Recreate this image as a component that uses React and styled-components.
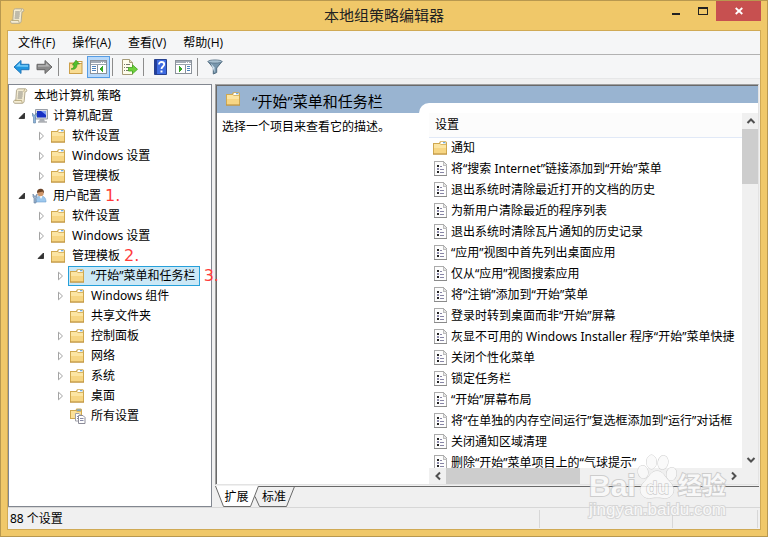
import React from 'react';
import styled, { createGlobalStyle, css } from 'styled-components';

const GlobalStyle = createGlobalStyle`
  * {
    box-sizing: border-box;
  }

  body {
    margin: 0;
    font-family: 'Noto Sans', 'Noto Sans CJK SC', sans-serif;
    font-size: 12px;
    line-height: 16px;
    color: #000;
  }

  button {
    margin: 0;
    padding: 0;
    border: 0;
    background: none;
    font: inherit;
    color: inherit;
  }

  svg {
    display: block;
    flex: none;
  }
`;

/* ---------- window frame ---------- */

const WindowFrame = styled.div`
  position: relative;
  display: flex;
  flex-direction: column;
  height: 100vh;
  padding: 0 6px 6px;
  border: 1px solid #b8984f;
  background: #f0c869;
`;

const TitleBar = styled.header`
  display: grid;
  grid-template-columns: 1fr auto 1fr;
  align-items: center;
  flex: none;
  height: 29px;
`;

const TitleIcon = styled.div`
  padding-left: 3px;
`;

const Title = styled.h1`
  margin: 0;
  padding-bottom: 2px;
  font-size: 15px;
  line-height: 20px;
  font-weight: 400;
  color: #222;
`;

const WindowControls = styled.div`
  display: flex;
  align-self: start;
  justify-content: flex-end;
`;

const ControlButton = styled.button`
  display: flex;
  align-items: center;
  justify-content: center;
  width: ${(p) => (p.$close ? '45px' : '27px')};
  height: 20px;
  background: ${(p) => (p.$close ? '#c75050' : 'transparent')};
`;

const Client = styled.div`
  display: flex;
  flex-direction: column;
  flex: 1;
  min-height: 0;
  border: 1px solid #d0aa55;
  background: #f0f0f0;
`;

/* ---------- menu and toolbar ---------- */

const MenuBar = styled.nav`
  display: flex;
  gap: 1px;
  flex: none;
  height: 24px;
  padding: 0 2px;
  border-bottom: 1px solid #b2b2b2;
  background: #f5f6f7;
`;

const MenuButton = styled.button`
  padding: 0 8px;
  font-family: 'Open Sans', 'Noto Sans CJK SC', sans-serif;
`;

const Toolbar = styled.div`
  display: flex;
  align-items: center;
  flex: none;
  height: 24px;
  padding: 1px 0 0 2px;
  border-bottom: 1px solid #e6e7e8;
  background: #f5f6f7;
`;

const ToolButton = styled.button`
  display: flex;
  align-items: center;
  justify-content: center;
  width: 23px;
  height: 22px;
  ${(p) =>
    p.$active &&
    css`
      border: 1px solid #569de5;
      background: #b8d8f9;
    `}
`;

const Separator = styled.span`
  width: 1px;
  height: 18px;
  margin: 0 5px 0 2px;
  background: #8c8c8c;
`;

/* ---------- panes ---------- */

const Workspace = styled.div`
  display: grid;
  grid-template-columns: 204px minmax(0, 1fr);
  column-gap: 3px;
  flex: 1;
  min-height: 0;
  padding: 5px 1px 0 0;
`;

const TreePane = styled.aside`
  position: relative;
  z-index: 1;
  padding-top: 1px;
  border: 1px solid #828790;
  background: #fff;
`;

const TreeList = styled.ul`
  margin: 0;
  padding: 0;
  list-style: none;
`;

const TreeRow = styled.div`
  display: flex;
  align-items: center;
  height: 20px;
  padding-left: ${(p) => (p.$depth ? p.$depth * 19 - 14 : 2)}px;
`;

const ArrowSlot = styled.span`
  display: flex;
  align-items: center;
  justify-content: center;
  flex: none;
  width: 16px;
`;

const TreeItem = styled.button`
  display: flex;
  align-items: center;
  gap: 5px;
  height: 20px;
  padding: 0 3px 0 1px;
  border: 1px solid ${(p) => (p.$selected ? '#26a0da' : 'transparent')};
  background: ${(p) => (p.$selected ? '#cbe8f6' : 'transparent')};
  white-space: nowrap;
`;

const StepMark = styled.span`
  padding-left: ${(p) => (p.$apart ? '4px' : '0')};
  font-family: 'DejaVu Sans', sans-serif;
  font-size: 16px;
  line-height: 20px;
  color: #ff3b3b;
`;

const ResultPane = styled.main`
  display: flex;
  flex-direction: column;
  min-height: 0;
`;

const ResultBox = styled.section`
  display: flex;
  flex-direction: column;
  flex: 1;
  min-height: 0;
  border: 1px solid;
  border-color: #a0a0a0 #e3e3e3 #e3e3e3 #a0a0a0;
  box-shadow: inset 1px 1px 0 #696969;
  padding: 1px 0 0 1px;
  background: #fff;
`;

const Banner = styled.div`
  display: grid;
  grid-template-columns: 202px minmax(0, 1fr);
  flex: none;
  height: 27px;
  background: #99b4d1;
`;

const BannerTitle = styled.h2`
  display: flex;
  align-items: center;
  gap: 10px;
  margin: 0;
  padding: 2px 0 0 9px;
  font-size: 15px;
  line-height: 20px;
  font-weight: 400;
  white-space: nowrap;
`;

const BannerIcon = styled.span`
  align-self: flex-start;
  padding-top: 3px;
`;

const BannerCurve = styled.div`
  align-self: end;
  height: 10px;
  border-top-left-radius: 10px;
  background: #fff;
`;

const Details = styled.div`
  display: grid;
  grid-template-columns: 212px minmax(0, 1fr);
  flex: 1;
  min-height: 0;
`;

const Description = styled.p`
  margin: 0;
  padding: 6px 5px;
`;

const ListArea = styled.div`
  display: grid;
  grid-template-columns: minmax(0, 1fr) 16px;
  grid-template-rows: minmax(0, 1fr) 16px;
  min-height: 0;
  background: #f0f0f0;
`;

const ListViewport = styled.div`
  overflow: hidden;
  background: #fff;
`;

const SettingsTable = styled.table`
  width: 100%;
  border-collapse: collapse;
  table-layout: fixed;
`;

const HeaderCell = styled.th`
  height: 24px;
  padding: 0 6px;
  border-bottom: 1px solid #e1e9f7;
  background: #fcfcfc;
  font-weight: 400;
  text-align: left;
`;

const SettingCell = styled.td`
  height: 21px;
  padding: 0 0 0 4px;
`;

const SettingName = styled.div`
  display: flex;
  align-items: center;
  gap: 2px;
  height: 20px;
  white-space: nowrap;
`;

const ScrollTrack = styled.div`
  display: flex;
  flex-direction: ${(p) => (p.$vertical ? 'column' : 'row')};
`;

const ScrollButton = styled.button`
  display: flex;
  align-items: center;
  justify-content: center;
  flex: none;
  width: 17px;
  height: 16px;
`;

const ScrollRail = styled.div`
  display: flex;
  flex-direction: inherit;
  flex: 1;
  min-height: 0;
`;

const ScrollThumb = styled.div`
  flex: 0 0 ${(p) => p.$size};
  background: #cdcdcd;
`;

/* ---------- bottom tabs and status bar ---------- */

const TabStrip = styled.div`
  display: flex;
  flex: none;
  height: 22px;
  padding-top: 1px;
`;

const TabButton = styled.button`
  position: relative;
  width: ${(p) => (p.$first ? '40px' : '38px')};
  height: 21px;
  padding-left: ${(p) => (p.$first ? '3px' : '0')};
`;

const TabShape = styled.svg`
  position: absolute;
  top: 0;
  left: 0;
  overflow: visible;
`;

const TabLabel = styled.span`
  position: relative;
`;

const TabFiller = styled.span`
  flex: 1;
  border-top: 1px solid #696969;
`;

const StatusBar = styled.footer`
  display: grid;
  grid-template-columns: minmax(0, 1fr) 133px 85px;
  flex: none;
  height: 22px;
  padding: 2px 2px 1px;
  border-top: 1px solid #d7d7d7;
`;

const StatusCell = styled.span`
  padding-top: 1px;
  border-right: 1px solid #d7d7d7;
`;

const Watermark = styled.div`
  position: absolute;
  z-index: 2;
  right: 40px;
  bottom: 16px;
  width: 138px;
  pointer-events: none;
  font-family: 'Liberation Sans', 'Noto Sans CJK SC', sans-serif;
  color: #fafafa;
  opacity: 0.85;
  -webkit-text-stroke: 2px #c8c8c8;
  paint-order: stroke fill;
`;

const WatermarkLogo = styled.div`
  display: flex;
  align-items: flex-end;
  height: 46px;
`;

const WatermarkText = styled.span`
  font-size: ${(p) => p.$size};
  line-height: 28px;
  font-weight: 700;
`;

const WatermarkUrl = styled.div`
  font-size: 17px;
  line-height: 20px;
  -webkit-text-stroke-color: #d2d2d2;
`;

/* ---------- icons ---------- */

const FolderIcon = () => (
  <svg width="16" height="16" viewBox="0 0 16 16">
    <path d="M0 3h6l1-1.700h6l1 1.200V14.500H0z" fill="#cfa850" />
    <path d="M7.800 2h4.900v2H7.200z" fill="#fff" />
    <path d="M10 2.200h2.300v1H10z" fill="#4a98dc" />
    <path d="M1 4h5.800l1.200.7h5v8.800H1z" fill="#fce5a3" />
    <path d="M1 8h12v5.500H1z" fill="#f7d684" />
    <path d="M0 14h14" stroke="#bd8f3c" />
  </svg>
);

const ScrollIcon = () => (
  <svg width="16" height="16" viewBox="0 0 16 16">
    <path d="M3.500 2.200C4 1 5 .8 6 .8h6.400c1.500 0 2 2.800.4 3H12l-.8 9c0 1.800-1 2.500-2.200 2.500H2c-1.800 0-2-3-.2-3h1z" fill="#f4ecd2" stroke="#b3aa90" />
    <path d="M10.500 3.800c.6 0 .6-2.600 1.600-2.800M1.800 12.400h6.800c.2 1.500.4 2.400 1 2.600" fill="none" stroke="#b8a97c" />
    <path d="M5.200 4h4.600M5 6h4.800M4.800 8h4.800M4.600 10h4.600" stroke="#8b8a83" />
  </svg>
);

const ComputerIcon = () => (
  <svg width="16" height="16" viewBox="0 0 16 16">
    <path d="M3.500 1.500h12v9.500h-12z" fill="#d9dde2" stroke="#9aa0a8" />
    <path d="M5 3h9v6.500H5z" fill="#1730c4" />
    <path d="M9 3h5v4z" fill="#7d9cf1" />
    <path d="M8 11h4l1 2.500H7z" fill="#a9aeb5" />
    <path d="M6 14h9" stroke="#85898f" />
    <path d="M.5 5v3l1 1v6h2V9l1-1V5L3.500 7h-2z" fill="#8fb4d8" stroke="#5b7fa6" strokeWidth=".6" />
  </svg>
);

const UserIcon = () => (
  <svg width="16" height="16" viewBox="0 0 16 16">
    <path d="M4 14c0-4 2-6 5-6s5 2 5 6z" fill="#9cc8ee" stroke="#6f9fcc" strokeWidth=".6" />
    <path d="M7.500 8l1.500 3 1.500-3z" fill="#fff" />
    <circle cx="8.500" cy="5" r="3.200" fill="#d0976a" />
    <path d="M5 5C4.800 2 6.500.8 8.500.8s4 1.400 3.300 4.500L10.500 3.500C8.500 4.300 6.800 4 5 5z" fill="#6b4428" />
    <path d="M1 6v3l1 1v5h2v-5l1-1V6L4 8H2z" fill="#9fb6cf" stroke="#5f7e9f" strokeWidth=".6" />
  </svg>
);

const AllSettingsIcon = () => (
  <svg width="16" height="16" viewBox="0 0 16 16">
    <path d="M0 2h5.500l1-1.500H11l1 1V11H0z" fill="#cfa850" />
    <path d="M1 3h5l1 .8h4V10H1z" fill="#fbe19a" />
    <path d="M7 1.500h4v1.200H6.700z" fill="#6aa8e0" />
    <path d="M5.500 5.500H9L10.500 7v6h-5z" fill="#fff" stroke="#a0a0a8" />
    <path d="M8.500 7.500H13l2 2v6H8.500z" fill="#fff" stroke="#8c8c98" />
    <path d="M7 8.500h1M7 10.500h1M10 10.500h3.500M10 12.500h3.500" stroke="#888aa8" />
  </svg>
);

const PolicyIcon = () => (
  <svg width="16" height="16" viewBox="0 0 16 16" shapeRendering="crispEdges">
    <path d="M1.500.500H10L13.500 4v10.500h-12z" fill="#fdfdfd" stroke="#ababab" />
    <path d="M10 .5V4h3.500" fill="#e6e6e6" stroke="#bdbdbd" />
    <path d="M1 14.500h13" stroke="#8a8a8a" />
    <path d="M4 4h2v2H4zM4 10h2v2H4z" fill="#222" />
    <path d="M4 7h2v2H4zM7 5h2v1H7zM7 8h4v1H7zM7 11h4v1H7z" fill="#8886a6" />
  </svg>
);

const TreeArrow = ({ open }) =>
  open ? (
    <svg width="8" height="8" viewBox="0 0 8 8">
      <path d="M6.500 1v5.500H1z" fill="#333" stroke="#222" strokeWidth=".8" />
    </svg>
  ) : (
    <svg width="8" height="10" viewBox="0 0 8 10">
      <path d="M2.500 1.200v7.600l4-3.800z" fill="#fff" stroke="#a3a3a3" />
    </svg>
  );

const ArrowIcon = ({ right }) => (
  <svg width="17" height="16" viewBox="0 0 17 16">
    <g transform={right ? 'translate(17 0) scale(-1 1)' : undefined}>
      <path
        d="M1 8l7-6.500v3.800h8v5.400H8v3.800z"
        fill={right ? '#8a8a8a' : '#1e96e0'}
        stroke={right ? '#666' : '#2377ba'}
      />
      <path d="M3 7.500l4-3.700v2.500h8v1.500z" fill={right ? '#b5b5b5' : '#7cd0fa'} />
    </g>
  </svg>
);

const FolderUpIcon = () => (
  <svg width="16" height="16" viewBox="0 0 16 16">
    <path d="M1 3.500h6L8.500 2h6v13H1z" fill="#cca04a" />
    <path d="M2 5h11.500v9H2z" fill="#f8dc93" />
    <path d="M9 3h4.500v1H9z" fill="#fff" />
    <path d="M3 10c2-.3 3-1.500 3-4H4.500L8 1.200 11.500 5H9c0 4-2 6-6 5z" fill="#52c02c" stroke="#369519" strokeWidth=".7" />
  </svg>
);

const PaneIcon = ({ right }) => (
  <svg width="17" height="14" viewBox="0 0 17 14" shapeRendering="crispEdges">
    <path d="M.5.500h16v13H.5z" fill="#fff" stroke="#8b929b" />
    <path d="M1 1h15v2H1z" fill="#a4acb7" />
    <path d="M1 4.500h15" stroke="#9aa3af" />
    <path d={right ? 'M10.500 5v8' : 'M7.500 5v8'} stroke="#8b929b" />
    <path
      d={right ? 'M12 6.500h3M12 8.500h3M12 10.500h3' : 'M2 6.500h4M2 8.500h4M2 10.500h4'}
      stroke="#4b82bd"
    />
    <path d={right ? 'M4 6v6l4-3z' : 'M13 6v6L9 9z'} fill="#37a626" />
    <path d="M11 2h1M13 2h1" stroke="#fff" />
  </svg>
);

const ExportIcon = () => (
  <svg width="17" height="16" viewBox="0 0 17 16">
    <path d="M1.500.5h7L11.500 3.500v12h-10z" fill="#fffdec" stroke="#a59b78" />
    <path d="M8.500.5v3h3" fill="#e6dfc0" stroke="#a59b78" />
    <path d="M3 5.500h1M3 8.500h1M3 11.500h1M5 5.500h4M5 8.500h3M5 11.500h3" stroke="#77776c" />
    <path d="M7.500 8.500h4V5.800l5 4.500-5 4.500v-2.800h-4z" fill="#6fd13c" stroke="#42a421" strokeWidth=".8" />
  </svg>
);

const HelpIcon = () => (
  <svg width="14" height="16" viewBox="0 0 14 16">
    <path d="M.5.5h12v15H.5z" fill="#3d6ae0" stroke="#27418f" />
    <path d="M1 1h2v14H1z" fill="#233f9c" />
    <path d="M5 5.500C5 3.700 6.200 3 7.500 3s2.700.8 2.700 2.300C10.200 7.500 7.500 7.500 7.500 10" fill="none" stroke="#fff" strokeWidth="1.800" />
    <path d="M6.500 11.500h2v2h-2z" fill="#fff" />
  </svg>
);

const FilterIcon = () => (
  <svg width="16" height="16" viewBox="0 0 16 16">
    <path d="M1 2.500L6.300 9v6l3.400-1.500V9L15 2.500z" fill="#7897ad" stroke="#516c80" />
    <path d="M4 4.500L7.500 8.500v5z" fill="#d0e2ee" />
    <ellipse cx="8" cy="2.500" rx="7" ry="1.600" fill="#a9c2d2" stroke="#5a7488" strokeWidth=".8" />
  </svg>
);

const chevrons = {
  up: 'M1.500 7L5 3.500 8.500 7',
  down: 'M1.500 3L5 6.500 8.500 3',
  left: 'M7 1.500L3.500 5 7 8.500',
  right: 'M3 1.500L6.500 5 3 8.500',
};

const Chevron = ({ dir }) => (
  <svg width="10" height="10" viewBox="0 0 10 10">
    <path d={chevrons[dir]} fill="none" stroke="#505050" strokeWidth="2" />
  </svg>
);

const PawIcon = () => (
  <svg width="42" height="46" viewBox="0 0 42 46">
    <g fill="#fafafa" stroke="#c8c8c8">
      <ellipse cx="7" cy="18" rx="5" ry="6.500" transform="rotate(-12 7 18)" />
      <ellipse cx="15.500" cy="8" rx="5" ry="7" />
      <ellipse cx="27" cy="8.500" rx="5" ry="7" transform="rotate(12 27 8.500)" />
      <ellipse cx="35.500" cy="20" rx="5" ry="6.500" transform="rotate(10 35.500 20)" />
      <path d="M21 17c6 0 8 6 11.500 9.500S39 34 37 39s-7 5.500-10 5c-4-.6-8-.6-12 0-3 .5-8 0-10-5s1-9 4.500-12.500S15 17 21 17z" />
    </g>
    <text x="10" y="40" fontSize="19" fontWeight="700" fill="#fafafa" stroke="#b8b8b8">
      du
    </text>
  </svg>
);

/* ---------- data ---------- */

const menus = ['文件(F)', '操作(A)', '查看(V)', '帮助(H)'];

const treeNodes = [
  { label: '本地计算机 策略', depth: 0, icon: ScrollIcon },
  { label: '计算机配置', depth: 1, icon: ComputerIcon, open: true },
  { label: '软件设置', depth: 2, open: false },
  { label: 'Windows 设置', depth: 2, open: false },
  { label: '管理模板', depth: 2, open: false },
  { label: '用户配置', depth: 1, icon: UserIcon, open: true, mark: '1.' },
  { label: '软件设置', depth: 2, open: false },
  { label: 'Windows 设置', depth: 2, open: false },
  { label: '管理模板', depth: 2, open: true, mark: '2.' },
  { label: '“开始”菜单和任务栏', depth: 3, open: false, selected: true, mark: '3.' },
  { label: 'Windows 组件', depth: 3, open: false },
  { label: '共享文件夹', depth: 3 },
  { label: '控制面板', depth: 3, open: false },
  { label: '网络', depth: 3, open: false },
  { label: '系统', depth: 3, open: false },
  { label: '桌面', depth: 3, open: false },
  { label: '所有设置', depth: 3, icon: AllSettingsIcon },
];

const settings = [
  '将“搜索 Internet”链接添加到“开始”菜单',
  '退出系统时清除最近打开的文档的历史',
  '为新用户清除最近的程序列表',
  '退出系统时清除瓦片通知的历史记录',
  '“应用”视图中首先列出桌面应用',
  '仅从“应用”视图搜索应用',
  '将“注销”添加到“开始”菜单',
  '登录时转到桌面而非“开始”屏幕',
  '灰显不可用的 Windows Installer 程序“开始”菜单快捷',
  '关闭个性化菜单',
  '锁定任务栏',
  '“开始”屏幕布局',
  '将“在单独的内存空间运行”复选框添加到“运行”对话框',
  '关闭通知区域清理',
  '删除“开始”菜单项目上的“气球提示”',
];

/* ---------- parts ---------- */

function PolicyTree() {
  return (
    <TreePane>
      <TreeList>
        {treeNodes.map((node, i) => {
          const Icon = node.icon || FolderIcon;
          return (
            <li key={i}>
              <TreeRow $depth={node.depth}>
                {node.depth > 0 && (
                  <ArrowSlot>
                    {node.open !== undefined && <TreeArrow open={node.open} />}
                  </ArrowSlot>
                )}
                <TreeItem $selected={node.selected}>
                  <Icon />
                  {node.label}
                </TreeItem>
                {node.mark && <StepMark $apart={node.selected}>{node.mark}</StepMark>}
              </TreeRow>
            </li>
          );
        })}
      </TreeList>
    </TreePane>
  );
}

function SettingsList() {
  return (
    <ListArea>
      <ListViewport>
        <SettingsTable>
          <thead>
            <tr>
              <HeaderCell scope="col">设置</HeaderCell>
            </tr>
          </thead>
          <tbody>
            <tr>
              <SettingCell>
                <SettingName>
                  <FolderIcon />
                  通知
                </SettingName>
              </SettingCell>
            </tr>
            {settings.map((name) => (
              <tr key={name}>
                <SettingCell>
                  <SettingName>
                    <PolicyIcon />
                    {name}
                  </SettingName>
                </SettingCell>
              </tr>
            ))}
          </tbody>
        </SettingsTable>
      </ListViewport>
      <ScrollTrack $vertical>
        <ScrollButton aria-label="向上滚动">
          <Chevron dir="up" />
        </ScrollButton>
        <ScrollRail>
          <ScrollThumb $size="17%" />
        </ScrollRail>
        <ScrollButton aria-label="向下滚动">
          <Chevron dir="down" />
        </ScrollButton>
      </ScrollTrack>
      <ScrollTrack>
        <ScrollButton aria-label="向左滚动">
          <Chevron dir="left" />
        </ScrollButton>
        <ScrollRail>
          <ScrollThumb $size="48%" />
        </ScrollRail>
        <ScrollButton aria-label="向右滚动">
          <Chevron dir="right" />
        </ScrollButton>
      </ScrollTrack>
    </ListArea>
  );
}

function ViewTabs() {
  return (
    <TabStrip role="tablist">
      <TabButton $first role="tab" aria-selected="true">
        <TabShape width="43" height="21">
          <path d="M.5 0L8.500 20.500h27L43.500 0" fill="#fff" stroke="#696969" />
        </TabShape>
        <TabLabel>扩展</TabLabel>
      </TabButton>
      <TabButton role="tab" aria-selected="false">
        <TabShape width="38" height="21">
          <path d="M0 10.500l4.500 10h27L39.500.5H3.500" fill="none" stroke="#696969" />
        </TabShape>
        <TabLabel>标准</TabLabel>
      </TabButton>
      <TabFiller />
    </TabStrip>
  );
}

export default function App() {
  return (
    <>
      <GlobalStyle />
      <WindowFrame>
        <TitleBar>
          <TitleIcon>
            <ScrollIcon />
          </TitleIcon>
          <Title>本地组策略编辑器</Title>
          <WindowControls>
            <ControlButton aria-label="最小化">
              <svg width="10" height="10" viewBox="0 0 10 10">
                <path d="M1 7h8v2H1z" fill="#222" />
              </svg>
            </ControlButton>
            <ControlButton aria-label="最大化">
              <svg width="10" height="8" viewBox="0 0 10 8" shapeRendering="crispEdges">
                <path d="M0 0h10v8H0zM1 2v5h8V2z" fill="#222" fillRule="evenodd" />
              </svg>
            </ControlButton>
            <ControlButton $close aria-label="关闭">
              <svg width="8" height="8" viewBox="0 0 8 8">
                <path d="M.7 1l6.600 6M7.300 1L.7 7" stroke="#fff" strokeWidth="1.800" />
              </svg>
            </ControlButton>
          </WindowControls>
        </TitleBar>
        <Client>
          <MenuBar>
            {menus.map((name) => (
              <MenuButton key={name}>{name}</MenuButton>
            ))}
          </MenuBar>
          <Toolbar>
            <ToolButton aria-label="后退">
              <ArrowIcon />
            </ToolButton>
            <ToolButton aria-label="前进">
              <ArrowIcon right />
            </ToolButton>
            <Separator />
            <ToolButton aria-label="上移一级">
              <FolderUpIcon />
            </ToolButton>
            <ToolButton $active aria-label="显示/隐藏控制台树">
              <PaneIcon />
            </ToolButton>
            <Separator />
            <ToolButton aria-label="导出列表">
              <ExportIcon />
            </ToolButton>
            <Separator />
            <ToolButton aria-label="帮助">
              <HelpIcon />
            </ToolButton>
            <ToolButton aria-label="显示/隐藏操作窗格">
              <PaneIcon right />
            </ToolButton>
            <Separator />
            <ToolButton aria-label="筛选器">
              <FilterIcon />
            </ToolButton>
          </Toolbar>
          <Workspace>
            <PolicyTree />
            <ResultPane>
              <ResultBox>
                <Banner>
                  <BannerTitle>
                    <BannerIcon>
                      <FolderIcon />
                    </BannerIcon>
                    “开始”菜单和任务栏
                  </BannerTitle>
                  <BannerCurve />
                </Banner>
                <Details>
                  <Description>选择一个项目来查看它的描述。</Description>
                  <SettingsList />
                </Details>
              </ResultBox>
              <ViewTabs />
            </ResultPane>
          </Workspace>
          <StatusBar>
            <StatusCell>88 个设置</StatusCell>
            <StatusCell />
            <StatusCell />
          </StatusBar>
        </Client>
        <Watermark>
          <WatermarkLogo>
            <WatermarkText $size="30px">Bai</WatermarkText>
            <PawIcon />
            <WatermarkText $size="24px">经验</WatermarkText>
          </WatermarkLogo>
          <WatermarkUrl>jingyan.baidu.com</WatermarkUrl>
        </Watermark>
      </WindowFrame>
    </>
  );
}
